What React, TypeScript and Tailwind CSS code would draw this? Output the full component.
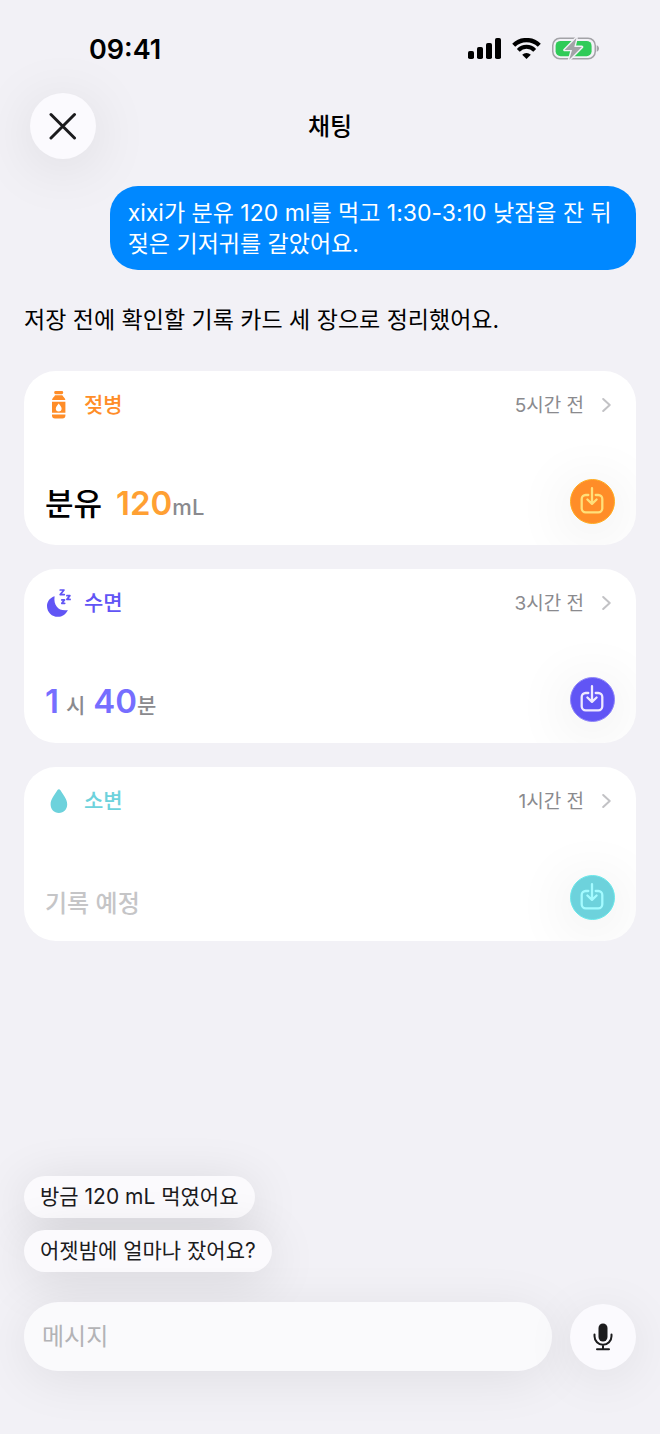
import type { ReactNode } from "react";

type RecordCard = {
  id: string;
  label: string;
  time: string;
  accent: string;
  button: string;
  icon: ReactNode;
  content: ReactNode;
};

function SignalIcon() {
  return (
    <svg width="33" height="21" viewBox="0 0 33 21" aria-hidden="true">
      <rect x="0" y="13" width="6" height="8" rx="1.8" />
      <rect x="9" y="9" width="6" height="12" rx="1.8" />
      <rect x="18" y="5" width="6" height="16" rx="1.8" />
      <rect x="27" y="0" width="6" height="21" rx="1.8" />
    </svg>
  );
}

function WifiIcon() {
  return (
    <svg width="29" height="21" viewBox="0 0 29 21" fill="none" aria-hidden="true">
      <path d="M1.700 7.300a18.200 18.200 0 0 1 25.600 0" stroke="#000" strokeWidth="4.300" />
      <path d="M6.300 12.300a11.500 11.500 0 0 1 16.400 0" stroke="#000" strokeWidth="4" />
      <path d="M14.500 21l-4.300-4.300a6 6 0 0 1 8.600 0z" fill="#000" />
    </svg>
  );
}

function BatteryIcon() {
  return (
    <svg width="47" height="24" viewBox="0 0 47 24" fill="none" aria-hidden="true">
      <rect x="0.75" y="1.25" width="42.5" height="20.5" rx="7.2" stroke="#a3a3a7" strokeWidth="1.5" />
      <path d="M44.7 8.2c1.4.5 2.3 1.800 2.300 3.300s-.9 2.800-2.300 3.300z" fill="#a3a3a7" />
      <rect x="3.6" y="3.900" width="36" height="15.400" rx="5" fill="#30cb58" />
      <path
        d="M24.400 1L12.600 12.900h7.400L17.200 22.800 29.900 10h-7.600z"
        fill="#a3a3a7"
        stroke="#f2f1f6"
        strokeWidth="2.800"
        strokeLinejoin="round"
        paintOrder="stroke"
      />
    </svg>
  );
}

function BottleIcon() {
  return (
    <svg width="27" height="28" viewBox="0 0 27 28" fill="currentColor" aria-hidden="true">
      <rect x="9.2" y="0" width="9" height="3.2" rx="1.4" />
      <path d="M10 4.2h7.4c.3 1.3 2.7 2.3 3 4.7H7c.3-2.4 2.7-3.4 3-4.7z" />
      <path
        fillRule="evenodd"
        d="M7 10.7h13.4v11H7zM13.7 12.5c-1.1 1.8-2.9 3.2-2.9 5.1a2.9 2.9 0 0 0 5.8 0c0-1.9-1.8-3.3-2.9-5.1z"
      />
      <path d="M7 23.4h13.4v1.2a3 3 0 0 1-3 3H10a3 3 0 0 1-3-3z" />
    </svg>
  );
}

function SleepIcon() {
  return (
    <svg width="27" height="28" viewBox="0 0 27 28" fill="none" aria-hidden="true">
      <path
        d="M9.600 7.200C5.200 8.400 2 12.300 2 17a10.800 10.800 0 0 0 10.800 10.800c4.500 0 8.400-2.700 10-6.900-.9.300-1.800.4-2.700.4-7.200 0-11.700-5.300-10.500-14.100z"
        fill="currentColor"
      />
      <g stroke="currentColor" strokeWidth="1.700" strokeLinejoin="round" strokeLinecap="round">
        <path d="M15.200 1h3.800l-3.800 4.600h4.100" />
        <path d="M21.900 6.700h3l-3 3.700h3.200" />
        <path d="M16.800 10.900h2.700l-2.700 3.400h2.900" />
      </g>
    </svg>
  );
}

function DropIcon() {
  return (
    <svg width="27" height="28" viewBox="0 0 27 28" fill="currentColor" aria-hidden="true">
      <path d="M13.900 2.200c.6 0 1 .3 1.400.9 2.800 4.400 6.900 9.300 6.900 14.200 0 5.200-3.400 8.600-8.300 8.600s-8.300-3.400-8.300-8.600c0-4.900 4.100-9.800 6.900-14.200.4-.6.800-.9 1.400-.9z" />
    </svg>
  );
}

function SaveIcon() {
  return (
    <svg
      width="25"
      height="29"
      viewBox="0 0 25 29"
      fill="none"
      stroke="currentColor"
      strokeWidth="2.300"
      strokeLinecap="round"
      strokeLinejoin="round"
      aria-hidden="true"
    >
      <path d="M8.300 8H5.700a4 4 0 0 0-4 4v9.300a4 4 0 0 0 4 4h12.600a4 4 0 0 0 4-4V12a4 4 0 0 0-4-4h-2.600" />
      <path d="M12 1.200v15.600M7.400 12.500l4.600 4.400 4.600-4.400" />
    </svg>
  );
}

function MicIcon() {
  return (
    <svg width="20" height="28" viewBox="0 0 20 28" fill="none" aria-hidden="true">
      <rect x="5.500" y="0.500" width="9" height="18" rx="4.500" fill="#1b1b1d" />
      <path
        d="M1.500 11.500v1.800a8.500 8.500 0 0 0 17 0v-1.800M10 22v4M4 26.200h12"
        stroke="#1b1b1d"
        strokeWidth="2"
        strokeLinecap="round"
      />
    </svg>
  );
}

const figure = "text-[33px] font-semibold";

const records: RecordCard[] = [
  {
    id: "bottle",
    label: "젖병",
    time: "5시간 전",
    accent: "text-[#ff8d28]",
    button: "bg-[#ff8d28] border-[#ffac20] text-[#ffe07a]",
    icon: <BottleIcon />,
    content: (
      <>
        <span className="mr-[14px] text-[31px] font-medium text-black">분유</span>
        <span className={`${figure} text-[#ffa033]`}>120</span>
        <span className="text-[22px] font-medium text-[#8a8a8e]">mL</span>
      </>
    ),
  },
  {
    id: "sleep",
    label: "수면",
    time: "3시간 전",
    accent: "text-[#6155f5]",
    button: "bg-[#6155f5] border-[#8f86f8] text-[#efe9ff]",
    icon: <SleepIcon />,
    content: (
      <>
        <span className={`${figure} text-[#766eff]`}>1</span>
        <span className="mr-2 ml-[7px] text-[21px] font-medium text-[#8a8a8e]">시</span>
        <span className={`${figure} text-[#766eff]`}>40</span>
        <span className="text-[21px] font-medium text-[#8a8a8e]">분</span>
      </>
    ),
  },
  {
    id: "pee",
    label: "소변",
    time: "1시간 전",
    accent: "text-[#6dd2dc]",
    button: "bg-[#6dd2dc] border-[#6ae8ea] text-[#a4fbff]",
    icon: <DropIcon />,
    content: <span className="text-[24px] font-medium text-[#c5c5c7]">기록 예정</span>,
  },
];

const suggestions = ["방금 120 mL 먹였어요", "어젯밤에 얼마나 잤어요?"];

function Card({ record }: { record: RecordCard }) {
  return (
    <article className="flex h-[174px] flex-col justify-between overflow-hidden rounded-[32px] bg-white p-[21px]">
      <a href={`#${record.id}`} className="flex h-[26px] items-center">
        <span className={`flex flex-1 items-center gap-3 text-[21px] font-medium ${record.accent}`}>
          {record.icon}
          {record.label}
        </span>
        <span className="mr-[18px] pt-0.5 text-[19px] text-[#8a8a8e]">{record.time}</span>
        <svg className="mr-1" width="9" height="16" viewBox="0 0 9 16" fill="none" aria-hidden="true">
          <path d="M1.200 2L7.700 8l-6.500 6" stroke="#c2c2c5" strokeWidth="2" strokeLinecap="round" strokeLinejoin="round" />
        </svg>
      </a>
      <div className="flex items-end justify-between">
        <p className="flex items-baseline leading-[33px]">{record.content}</p>
        <button
          type="button"
          aria-label={`${record.label} 저장`}
          className={`flex size-[45px] items-center justify-center rounded-full border shadow-[0_8px_60px_rgba(0,0,0,0.12)] ${record.button}`}
        >
          <SaveIcon />
        </button>
      </div>
    </article>
  );
}

export default function App() {
  return (
    <div className="flex min-h-screen flex-col bg-[#f2f1f6] font-['Inter','Noto_Sans_CJK_KR',sans-serif] text-black">
      <div className="flex h-[93px] items-center justify-between pt-1 pr-[61px] pl-[89px]">
        <span className="pt-[3px] text-[27px] font-semibold">09:41</span>
        <div className="flex items-center gap-[11px]">
          <SignalIcon />
          <WifiIcon />
          <BatteryIcon />
        </div>
      </div>

      <header className="grid grid-cols-[66px_1fr_66px] items-center px-[30px]">
        <button
          type="button"
          aria-label="닫기"
          className="flex size-[66px] items-center justify-center rounded-full bg-[#fbfafe] shadow-[0_8px_60px_rgba(0,0,0,0.1)]"
        >
          <svg width="28" height="28" viewBox="0 0 28 28" fill="none" aria-hidden="true">
            <path d="M2 2.500l23.500 23.500M25.500 2.500L2 26" stroke="#1b1b1d" strokeWidth="3" strokeLinecap="round" />
          </svg>
        </button>
        <h1 className="pt-0.5 text-center text-[24px] font-medium">채팅</h1>
      </header>

      <main className="flex flex-col px-6 pt-[27px]">
        <p className="w-[86%] self-end rounded-[28px] bg-[#0088ff] px-[18px] pt-3 pb-[10px] text-[23px] leading-[31px] break-keep text-white">
          xixi가 분유 120 ml를 먹고 1:30-3:10 낮잠을 잔 뒤 젖은 기저귀를 갈았어요.
        </p>
        <p className="mt-[35px] text-[23px] leading-[31px]">저장 전에 확인할 기록 카드 세 장으로 정리했어요.</p>
        <div className="mt-[35px] flex flex-col gap-6">
          {records.map((record) => (
            <Card key={record.id} record={record} />
          ))}
        </div>
      </main>

      <footer className="mt-auto px-6 pb-[63px]">
        <div className="flex flex-col items-start gap-3">
          {suggestions.map((text) => (
            <button
              key={text}
              type="button"
              className="h-[42px] rounded-full bg-[#fbfafd] px-4 text-[21px] text-[#1b1b1d] shadow-[0_8px_52px_rgba(0,0,0,0.12)]"
            >
              {text}
            </button>
          ))}
        </div>
        <form className="mt-[30px] flex items-center gap-[18px]" onSubmit={(event) => event.preventDefault()}>
          <input
            type="text"
            aria-label="메시지"
            placeholder="메시지"
            className="h-[69px] min-w-0 flex-1 rounded-full bg-[#fbfbfd]/90 px-[18px] text-[24px] text-[#1b1b1d] shadow-[0_8px_52px_rgba(0,0,0,0.08)] outline-none placeholder:text-[#b3b3b6]"
          />
          <button
            type="button"
            aria-label="음성 입력"
            className="flex size-[66px] shrink-0 items-center justify-center rounded-full bg-[#fbfafe] shadow-[0_8px_52px_rgba(0,0,0,0.08)]"
          >
            <MicIcon />
          </button>
        </form>
      </footer>
    </div>
  );
}
